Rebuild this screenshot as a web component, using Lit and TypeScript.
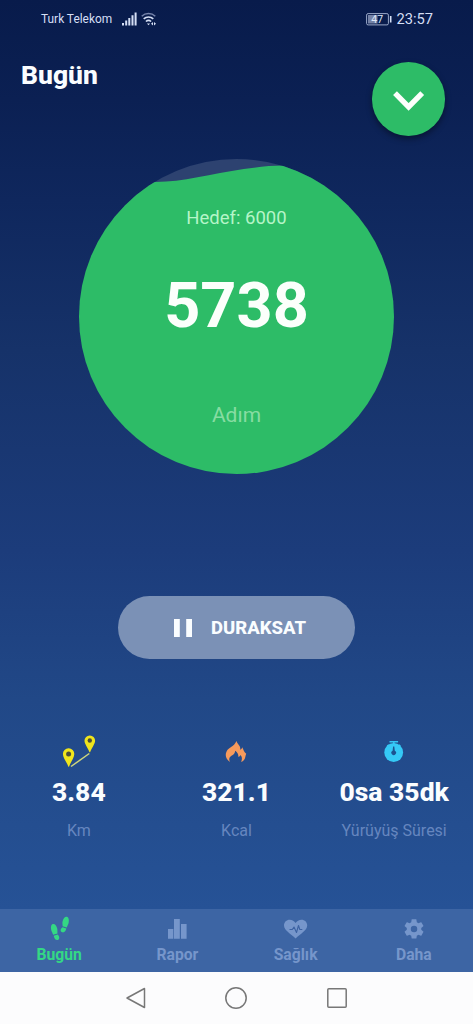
import { LitElement, html, css, svg } from "lit";
import { customElement, property } from "lit/decorators.js";

const routeIcon = svg`<svg width="34" height="34" viewBox="62 734 34 34">
  <path d="M71 766.500L89.300 753.500" stroke="#cfd67c" stroke-width="1.500" fill="none"/>
  <path fill="#f0e51c" d="M68.600 748.300a5.600 5.600 0 0 0-5.700 5.700c0 3.600 3.600 7.600 5.500 12.800h.6c1.900-5.200 5.300-9.200 5.300-12.800a5.600 5.600 0 0 0-5.700-5.700zM89.800 735.400a5.200 5.200 0 0 0-5.300 5.300c0 3.300 3.300 6.700 5 11.600h.6c1.700-4.900 5-8.300 5-11.600a5.200 5.200 0 0 0-5.300-5.300z"/>
  <circle cx="68.600" cy="754" r="2.500" fill="#4c4f3a"/><circle cx="89.800" cy="740.500" r="2.200" fill="#4c4f3a"/>
</svg>`;

const flameIcon = svg`<svg width="34" height="34" viewBox="219 734 34 34">
  <path fill="#f69a5c" d="M230 762c-4.300-3-5.200-7.400-3.200-11 1.800-3.200 7.400-4.500 9.700-9.900.5 2.300 2.200 3.500 3.200 5.200.6 1.100.7 2.300.5 3.400 1.200-.5 1.800-1.400 2-2.400 1.400 2.300 1.600 4.600 4 6.400-.9 1.700-.6 4.500-2.200 6.300-.8.9-1.800 1.600-2.900 2 1.300-2.700 1.100-5.300-.6-7-.5 1.100-1.200 1.700-2.200 1.800.3-2.400-.9-4.400-3.100-6-.3 2.700-1.500 3.700-3.300 4.800-2.400 1.500-3.400 3.300-1.900 6.400z"/>
</svg>`;

const stopwatchIcon = svg`<svg width="34" height="34" viewBox="377 734 34 34">
  <path d="M389.500 741.700h8.600M393.800 741.500v3.500M387.300 746.200l1.500-1.500M400.300 746.200l-1.500-1.500" stroke="#35c6f4" stroke-width="1.500" fill="none"/>
  <circle cx="393.700" cy="752.500" r="9.400" fill="#35c9f6"/>
  <path fill="#1c5391" d="M393.100 746.500h1.200l.5 4.300a2.300 2.300 0 1 1-2.200 0z"/>
</svg>`;

const stepsIcon = svg`<svg width="34" height="26" viewBox="42 915 34 26">
  <path fill="#34d884" d="M66.800 916.800c2 .5 2.500 3.500 1.800 6.300-.5 1.800-1.300 3-1.900 4.500l-4.100-1.300c.1-1.700-.5-3.200 0-5.100.7-2.700 2.400-4.800 4.200-4.400zM62.500 927.300l3.800 1.200c-.4 2.600-2 4.300-4 3.800-2.100-.6-2.400-3.200.2-5zM52.900 924.100c1.900-.4 3.600 1.600 4.300 4.300.4 1.800.1 3.300.3 5l-4.300 1.300c-.6-1.500-1.400-2.700-1.900-4.500-.7-2.800-.3-5.700 1.600-6.100zM53.700 935.700l3.900-1.200c2.100 1.800 2.300 4.800.2 5.500-2 .5-3.500-1.300-4.100-4.300z"/>
</svg>`;

const barsIcon = svg`<svg width="34" height="26" viewBox="160 915 34 26">
  <path fill="#7696cb" d="M168 929h5.300v9.800H168zM174 919h5.800v19.800H174zM181 924h5.600v14.800H181z"/>
</svg>`;

const heartIcon = svg`<svg width="34" height="26" viewBox="279 915 34 26">
  <path fill="#7696cb" d="M295.600 938.500C291 934 284 930.300 284 925.500c0-3.300 2.500-5.700 5.700-5.700 2.500 0 4.700 1.300 5.900 3.300 1.200-2 3.400-3.300 5.900-3.300 3.200 0 5.700 2.400 5.700 5.700 0 4.800-7 8.500-11.600 13z"/>
  <path d="M289.500 929.500h2.800l1.700-2.500 2.500 5.500 2-7 1.300 4h2.500" stroke="#3c62a2" stroke-width="1.100" fill="none" stroke-linejoin="round"/>
</svg>`;

const gearIcon = svg`<svg width="34" height="26" viewBox="397 915 34 26">
  <path transform="translate(401.900 916.800) scale(1.010)" fill="#7696cb" d="M19.140 12.940c.04-.3.06-.61.06-.94s-.02-.64-.07-.94l2.030-1.580c.18-.14.23-.41.12-.61l-1.920-3.320c-.12-.22-.37-.29-.59-.22l-2.390.96c-.5-.38-1.030-.7-1.620-.94l-.36-2.540c-.04-.24-.24-.41-.48-.41h-3.840c-.24 0-.43.17-.47.41l-.36 2.540c-.59.24-1.130.57-1.620.94l-2.390-.96c-.22-.08-.47 0-.59.22L2.740 8.870c-.12.21-.08.47.12.61l2.030 1.580c-.05.3-.09.63-.09.94s.02.64.07.94l-2.030 1.580c-.18.14-.23.41-.12.61l1.920 3.320c.12.22.37.29.59.22l2.390-.96c.5.38 1.030.7 1.620.94l.36 2.540c.05.24.24.41.48.41h3.840c.24 0 .44-.17.47-.41l.36-2.540c.59-.24 1.130-.56 1.620-.94l2.390.96c.22.08.47 0 .59-.22l1.920-3.320c.12-.22.07-.47-.12-.61zM12 15.200A3.200 3.200 0 1 1 12 8.800a3.200 3.200 0 0 1 0 6.400z"/>
</svg>`;

@customElement("status-bar")
class StatusBar extends LitElement {
  static styles = css`
    :host { display: flex; align-items: center; height: 38px; padding: 0 40px 0 41px; color: #d5dff5; }
    .carrier { width: 71px; font-size: 11.900px; margin-right: 10px; white-space: nowrap; }
    .signal { margin-right: 4px; }
    .grow { flex: 1; }
    .battery { margin-right: 4px; }
    .time { font-size: 14.700px; }
    svg { display: block; }
    .level { font: 10.500px Roboto, sans-serif; fill: #dfe7f8; }
  `;
  render() {
    return html`
      <span class="carrier">Turk Telekom</span>
      <svg class="signal" width="15" height="14" viewBox="0 0 15 14">
        <path fill="#d5dff5" d="M0 11h2v2.500H0zM3.200 8.500h2v5h-2zM6.300 6h2v7.500h-2zM9.500 3.300h2v10.200h-2zM12.600.5h2v13h-2z"/>
      </svg>
      <svg width="16" height="14" viewBox="0 0 16 14" fill="none" stroke="#d5dff5">
        <path d="M.7 4.200a10 10 0 0 1 13.600 0" stroke="#7684ab" stroke-width="1.500"/>
        <path d="M2.700 6.900a7 7 0 0 1 9.600 0M4.900 9.500a4 4 0 0 1 5.200 0" stroke-width="1.600"/>
        <path d="M7.500 13.300l-1.600-1.800h3.200zM12 10v3.500l-2-1.700zM13 10v3.500l2-1.700z" fill="#d5dff5" stroke="none"/>
      </svg>
      <span class="grow"></span>
      <svg class="battery" width="26" height="14" viewBox="0 0 26 14">
        <rect x=".6" y="1.600" width="21.800" height="11.300" rx="1.500" fill="none" stroke="#9ba9c9"/>
        <rect x="2" y="3" width="9.500" height="8.500" fill="#7482a6"/>
        <path d="M24.700 4v6.500" stroke="#d5dff5" stroke-width="1.600"/>
        <text class="level" x="5.300" y="11">47</text>
      </svg>
      <span class="time">23:57</span>
    `;
  }
}

@customElement("step-goal")
class StepGoal extends LitElement {
  @property({ type: Number }) goal = 0;
  @property({ type: Number }) steps = 0;
  static styles = css`
    :host { display: grid; width: 315px; height: 315px; }
    .disc, .texts { grid-area: 1 / 1; }
    .disc { display: block; }
    .texts { display: flex; flex-direction: column; align-items: center; }
    .goal { margin-top: 47px; font-size: 18.500px; line-height: 24px; color: #b5f5c8; }
    .steps { margin-top: 40px; font-size: 63px; line-height: 72px; font-weight: 700; color: #fbfffb; }
    .unit { margin-top: 60px; font-size: 21px; line-height: 26px; color: #87dca2; }
  `;
  render() {
    return html`
      <svg class="disc" width="315" height="315" viewBox="79 159 315 315">
        <defs><clipPath id="c"><circle cx="236.500" cy="316.500" r="157.500"/></clipPath></defs>
        <g clip-path="url(#c)">
          <path fill="#2d4270" d="M79 159h315v60H79z"/>
          <path fill="#2dbc67" d="M79 174C120 180 145 183 166 181.600C200 179 240 166 284 165.600C320 165 350 175 394 182V474H79z"/>
        </g>
      </svg>
      <div class="texts">
        <div class="goal">Hedef: ${this.goal}</div>
        <div class="steps">${this.steps}</div>
        <div class="unit">Adım</div>
      </div>
    `;
  }
}

@customElement("app-root")
class AppRoot extends LitElement {
  static styles = css`
    :host {
      display: flex; flex-direction: column; width: 473px; height: 1024px; overflow: hidden;
      font-family: Roboto, "Open Sans", sans-serif;
      background: linear-gradient(#081b4b 0, #0b2053 100px, #0f275d 200px, #163269 350px, #1c3c7b 550px, #214887 700px, #265296 909px);
    }
    svg { display: block; }
    .header { display: flex; justify-content: space-between; height: 121px; padding: 0 28px 0 21px; box-sizing: border-box; }
    .title { margin: 20px 0 0; font-size: 26.500px; line-height: 34px; font-weight: 800; color: #fafdff; }
    .expand { width: 73.500px; height: 73.500px; margin-top: 24px; padding: 0; border: 0; border-radius: 50%; background: #2dbc67; box-shadow: 0 3px 6px #0006; }
    .goal-ring { align-self: center; }
    .pause {
      display: flex; align-items: center; align-self: center; width: 237px; height: 63px; box-sizing: border-box;
      margin: 122px 0 0; padding: 0 0 0 56px; gap: 19px; border: 0; border-radius: 32px;
      background: #7b91b6; color: #fafdff; font: 800 18.500px/24px Roboto, sans-serif;
    }
    .stats { display: grid; grid-template-columns: repeat(3, 1fr); margin-top: 75px; height: 175px; }
    .stat { display: flex; flex-direction: column; align-items: center; }
    .value { margin-top: 7px; font-size: 26.500px; line-height: 33px; font-weight: 800; color: #fafdff; white-space: nowrap; }
    .label { margin-top: 13px; font-size: 16px; line-height: 20px; color: #6686bf; white-space: nowrap; }
    .tabs { display: grid; grid-template-columns: repeat(4, 1fr); height: 63px; background: #3d65a4; }
    .tab { display: flex; flex-direction: column; align-items: center; padding-top: 6px; color: #7696cb; font-size: 15.700px; line-height: 20px; font-weight: 700; }
    .tab-label { margin-top: 4px; }
    .active { color: #34d884; }
    .system { display: flex; justify-content: center; align-items: center; gap: 77.500px; height: 52px; padding-right: 1px; background: #fcfcfd; }
  `;

  private stats = [
    { icon: routeIcon, value: "3.84", label: "Km" },
    { icon: flameIcon, value: "321.1", label: "Kcal" },
    { icon: stopwatchIcon, value: "0sa 35dk", label: "Yürüyüş Süresi" },
  ];

  private tabs = [
    { icon: stepsIcon, label: "Bugün", active: true },
    { icon: barsIcon, label: "Rapor", active: false },
    { icon: heartIcon, label: "Sağlık", active: false },
    { icon: gearIcon, label: "Daha", active: false },
  ];

  render() {
    return html`
      <status-bar></status-bar>
      <div class="header">
        <h1 class="title">Bugün</h1>
        <button class="expand">
          <svg width="73" height="73" viewBox="0 0 73 73"><path d="M23 31.200L36.600 44.900L50.200 31.200" fill="none" stroke="#fcfffc" stroke-width="5.400"/></svg>
        </button>
      </div>
      <step-goal class="goal-ring" .goal=${6000} .steps=${5738}></step-goal>
      <button class="pause">
        <svg width="18" height="18" viewBox="0 0 18 18"><path fill="#fafdff" d="M0 0h5.800v18H0zM12.200 0H18v18h-5.800z"/></svg>
        <span>DURAKSAT</span>
      </button>
      <div class="stats">
        ${this.stats.map((s) => html`<div class="stat">${s.icon}<div class="value">${s.value}</div><div class="label">${s.label}</div></div>`)}
      </div>
      <div class="tabs">
        ${this.tabs.map((t) => html`<div class="tab ${t.active ? "active" : ""}">${t.icon}<div class="tab-label">${t.label}</div></div>`)}
      </div>
      <div class="system">
        <svg width="22" height="24" viewBox="0 0 22 24"><path d="M19.500 2.500v19L2 12z" fill="none" stroke="#777" stroke-width="1.500" stroke-linejoin="round"/></svg>
        <svg width="24" height="24" viewBox="0 0 24 24"><circle cx="12" cy="12" r="10.200" fill="none" stroke="#777" stroke-width="1.500"/></svg>
        <svg width="22" height="24" viewBox="0 0 22 24"><rect x="1.800" y="2.800" width="18.400" height="18.400" rx="1" fill="none" stroke="#777" stroke-width="1.500"/></svg>
      </div>
    `;
  }
}
